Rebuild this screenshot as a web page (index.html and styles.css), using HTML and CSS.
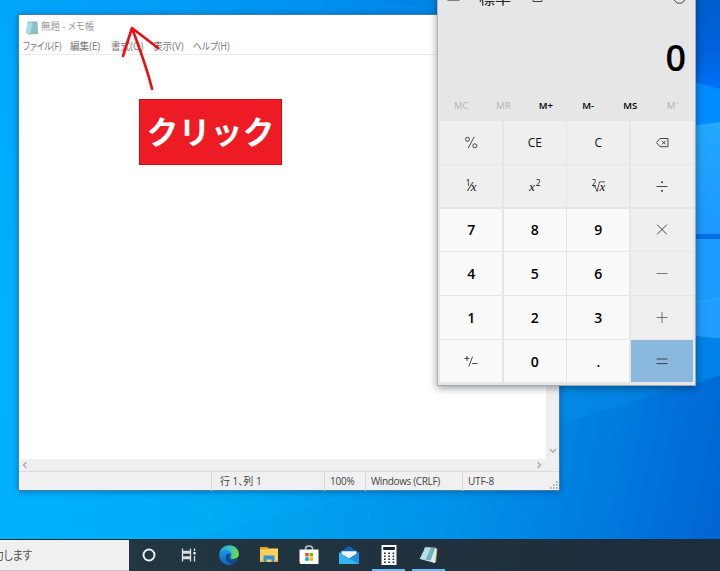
FILE: index.html
```html
<!DOCTYPE html>
<html lang="ja">
<head>
<meta charset="utf-8">
<title>デスクトップ</title>
<link rel="stylesheet" href="styles.css">
</head>
<body>
<main class="desktop">
  <svg class="wallpaper" viewBox="0 0 720 571" preserveAspectRatio="none" aria-hidden="true">
    <defs>
      <linearGradient id="base" gradientUnits="userSpaceOnUse" x1="20" y1="350" x2="745" y2="500">
        <stop offset="0" stop-color="#00b2fd"/><stop offset=".3" stop-color="#00abf6"/><stop offset=".6" stop-color="#0094e9"/><stop offset=".8" stop-color="#007ddf"/><stop offset="1" stop-color="#0060d0"/>
      </linearGradient>
      <linearGradient id="top" x1="0" y1="0" x2="1" y2="0">
        <stop offset="0" stop-color="#00a6fa"/><stop offset=".5" stop-color="#0099f3"/><stop offset="1" stop-color="#0084e6"/>
      </linearGradient>
      <linearGradient id="left" x1="0" y1="0" x2="0" y2="1">
        <stop offset="0" stop-color="#00a6fa"/><stop offset="1" stop-color="#00a6fa" stop-opacity="0"/>
      </linearGradient>
      <linearGradient id="corner" x1="0" y1="0" x2="0" y2="1">
        <stop offset="0" stop-color="#005fd0"/><stop offset=".55" stop-color="#0062dc"/><stop offset="1" stop-color="#0074ff"/>
      </linearGradient>
      <linearGradient id="beam" x1="0" y1="0" x2="0" y2="1">
        <stop offset="0" stop-color="#22a8ff"/><stop offset="1" stop-color="#1e98ff"/>
      </linearGradient>
    </defs>
    <rect width="720" height="571" fill="url(#base)"/>
    <path d="M0 14H20V300H0Z" fill="url(#left)"/>
    <path d="M0 0H440V14H0Z" fill="url(#top)"/>
    <path d="M385 0Q425 6 440 15V0Z" fill="#0085e4"/>
    <path d="M690 0H720V97L690 88Z" fill="url(#corner)"/>
    <path d="M690 81L720 89V134L690 138Z" fill="#008cff"/>
    <path d="M690 126L720 122V234H690Z" fill="url(#beam)"/>
    <path d="M690 234H720V239H690Z" fill="#0070e6"/>
    <path d="M690 239H720V299L690 303Z" fill="#1e9bff"/>
    <path d="M690 303L720 299V338L690 335Z" fill="#229dff"/>
    <path d="M690 303L720 299" stroke="#20b4ff"/>
    <path d="M690 335L720 338V375L690 385Z" fill="#0082e8"/>
    <path d="M690 335L720 338" stroke="#18a2fa"/>
    <path d="M720 375L560 424V385H695Z" fill="#0a98f0" opacity=".25"/>
    <path d="M190 539Q290 512 420 480V539Z" fill="#0093e8" opacity=".12"/>
  </svg>

  <section class="notepad">
    <header class="np-title">
      <svg class="np-icon" viewBox="0 0 14 14"><path d="M3.500 1.500 12.500 1.200 13.200 13 3 13.400Z" fill="#b9a98c"/><path d="M2.800 1 12 1 11.500 12.200 1 12.200Z" fill="#86c2d1"/><path d="M2.800 1 7.500 1 5.500 12.200 1 12.200Z" fill="#a9dbe4"/><path d="M3 1H12" stroke="#5a99aa" stroke-dasharray="1 .7"/></svg>
      <span class="cap"><span class="sq title-text">無題 - メモ帳</span></span>
    </header>
    <nav class="np-menu">
      <span class="m1"><span class="sq">ファイル(F)</span></span>
      <span class="m2"><span class="sq">編集(E)</span></span>
      <span class="m3"><span class="sq">書式(O)</span></span>
      <span class="m4"><span class="sq">表示(V)</span></span>
      <span class="m5"><span class="sq">ヘルプ(H)</span></span>
    </nav>
    <div class="np-body">
      <div class="np-page"></div>
      <div class="np-vscroll"><svg width="8" height="6" viewBox="0 0 8 6"><path d="M1 1 4 4.200 7 1"/></svg></div>
    </div>
    <div class="np-hscroll">
      <svg width="6" height="8" viewBox="0 0 6 8"><path d="M4.500 1 1.500 4 4.500 7"/></svg>
      <svg width="6" height="8" viewBox="0 0 6 8"><path d="M1.500 1 4.500 4 1.500 7"/></svg>
    </div>
    <footer class="np-status">
      <span></span>
      <span class="pos">行 1、列 1</span>
      <span>100%</span>
      <span class="eol">Windows (CRLF)</span>
      <span>UTF-8</span>
      <svg class="grip" viewBox="0 0 8 8"><path d="M6 0h1.700v1.700H6zM3 3h1.700v1.700H3zM6 3h1.700v1.700H6zM0 6h1.700v1.700H0zM3 6h1.700v1.700H3zM6 6h1.700v1.700H6z" fill="#aaa"/></svg>
    </footer>
  </section>

  <section class="calc">
    <header class="calc-head">
      <svg class="burger" viewBox="0 0 14 12"><path d="M.5 1.500h13M.5 6h13M.5 10.500h13"/></svg>
      <span class="mode">標準</span>
      <svg class="ontop" viewBox="0 0 12 12"><path d="M1 1h10v4M1 1v7M2 8.500V11.500H11V6"/></svg>
      <svg class="history" viewBox="0 0 13 13"><circle cx="6.500" cy="6.500" r="5.800"/><path d="M6.500 3v3.500h3"/></svg>
    </header>
    <output class="display">0</output>
    <div class="memory"><span class="off">MC</span><span class="off">MR</span><span>M+</span><span>M-</span><span>MS</span><span class="off">M<small>ˇ</small></span></div>
    <div class="keys">
      <button class="fn"><svg viewBox="0 0 16 16"><circle cx="4.500" cy="4.300" r="2"/><circle cx="11.800" cy="10.800" r="2"/><path d="M11.200 1.800 5.200 13.200"/></svg></button>
      <button class="fn">CE</button>
      <button class="fn">C</button>
      <button class="fn"><svg viewBox="0 0 16 16"><path d="M6 3.500h8v8.200H6L2.500 7.600ZM8 5.800l3.600 3.600M11.600 5.800 8 9.400"/></svg></button>
      <button class="fn math"><span class="frac"><sup>1</sup><b>∕</b><i>x</i></span></button>
      <button class="fn math"><i>x</i><sup class="pow">2</sup></button>
      <button class="fn math"><sup class="root">2</sup><svg class="radical" viewBox="0 0 13 13"><path d="M.5 7 2 6 4.500 12 7 1.500H13"/></svg><i class="under">x</i></button>
      <button class="fn"><svg viewBox="0 0 16 16"><path d="M2.500 7.500h11"/><circle cx="8" cy="3.200" r=".6" class="dot"/><circle cx="8" cy="11.800" r=".6" class="dot"/></svg></button>
      <button>7</button><button>8</button><button>9</button>
      <button class="fn"><svg viewBox="0 0 16 16"><path d="m3.200 2.700 9.600 9.600M12.800 2.700 3.200 12.300"/></svg></button>
      <button>4</button><button>5</button><button>6</button>
      <button class="fn"><svg class="thin" viewBox="0 0 16 16"><path d="M2.500 7.500h11"/></svg></button>
      <button>1</button><button>2</button><button>3</button>
      <button class="fn"><svg class="thin" viewBox="0 0 16 16"><path d="M2.500 7.500h11M8 2v11"/></svg></button>
      <button><svg viewBox="0 0 16 16"><path d="M1.500 4.500h5M4 2v5M9.600 2.500 5.800 12.500M9.200 9.500h5.300"/></svg></button>
      <button>0</button><button>.</button>
      <button class="equals"><svg viewBox="0 0 16 16"><path d="M2.500 5h11M2.500 9.600h11"/></svg></button>
    </div>
  </section>

  <div class="callout">クリック</div>
  <svg class="arrow" viewBox="0 0 50 70"><path d="M31 63Q27 45 11 2M2 30 11 2 37 22"/></svg>

  <footer class="taskbar">
    <div class="search"><span class="search-text">力します</span></div>
    <div class="task"><svg viewBox="0 0 20 20"><circle cx="10" cy="10" r="5.500" fill="none" stroke="#f2f2f2" stroke-width="1.900"/></svg></div>
    <div class="task"><svg viewBox="0 0 20 20"><path d="M3.500 3.500V6.500H11.500V3.500M3.500 16.500V13.500H11.500V16.500M3.500 8h8v4h-8zM15.500 3.500V6M15.500 11v5.500" fill="none" stroke="#d9dee0" stroke-width="1.300"/><path d="M14.300 7h2.400v2.500h-2.400z" fill="#e8ecee"/></svg></div>
    <div class="task"><svg viewBox="0 0 20 20"><defs><linearGradient id="e1" x1="0" y1="0" x2="1" y2=".2"><stop stop-color="#1d9fd8"/><stop offset=".5" stop-color="#2dc0d0"/><stop offset="1" stop-color="#6fd64c"/></linearGradient><linearGradient id="e2" x1="0" y1="0" x2="0" y2="1"><stop stop-color="#2097e0"/><stop offset="1" stop-color="#0f65bc"/></linearGradient></defs><path d="M.3 9C.8 3.800 5 .2 10 .2 16 .2 19.900 4.500 19.900 9c0 3.300-2.600 4.900-5.400 4.900-2.400 0-3.600-.7-3.100-1.500 1.500-2.200.3-5.600-3.400-5.700C4.200 6.600 1.500 7.500.3 9Z" fill="url(#e1)"/><path d="M.2 10C.5 7 3.400 5.100 6.800 5.100c3.800 0 6.100 2.200 6 4.800-.1 1.400-1.500 1.500-1.500 2.700 0 1.900 4 3.300 7.300.9C17 17.500 14 19.900 10 19.900 4.600 19.900 0 15.600.2 10Z" fill="url(#e2)"/><path d="M7.200 10.300c-1.500 4.500 1.600 8.700 6.300 8.900 2.400-.9 4.300-2.800 5.300-5.300-4 2.500-8.500 1-8.400-2.500 0-1 .6-1.700.9-2.500-1.600-.6-3.500-.2-4.100 1.400Z" fill="#114a93"/></svg></div>
    <div class="task"><svg viewBox="0 0 20 20"><path d="M1 2h7l1.500 1.500H19V17H1Z" fill="#ffd766"/><path d="M1 2h7l1 2.500H1Z" fill="#e8a30c"/><path d="M1 6h18v11H1Z" fill="#ffcf55"/><path d="M4.500 17v-6.500h11V17h-3v-2.500h-5V17Z" fill="#2f96de"/><path d="M1 15.500h3.500V17H1zM15.500 15.500H19V17h-3.500z" fill="#f2b735"/></svg></div>
    <div class="task"><svg viewBox="0 0 20 20"><path d="M6.500 5V3.500C6.500 0 13.500 0 13.500 3.500V5" fill="none" stroke="#bfc8cb" stroke-width="1.500"/><path d="M.5 4.500h19V19H2Q.5 19 .5 17Z" fill="#fff"/><path d="M6.200 8h3.500v3.500H6.200z" fill="#f25022"/><path d="M10.500 8H14v3.500h-3.500z" fill="#7fba00"/><path d="M6.200 12.300h3.500v3.500H6.200z" fill="#00a4ef"/><path d="M10.500 12.300H14v3.500h-3.500z" fill="#ffb900"/></svg></div>
    <div class="task"><svg viewBox="0 0 20 20"><path d="M0 7.500 10 1l10 6.500L10 14Z" fill="#0f60b6"/><path d="M2.500 6.300h15V9L10 13.500 2.500 9Z" fill="#f3f5f6"/><path d="M0 7.500 10 13.500 20 7.500V19H0Z" fill="#5ccaf5"/><path d="M0 7.500 20 19H0Z" fill="#35b5ef"/><path d="M20 7.500V19L10 13.500Z" fill="#1e8edb"/></svg></div>
    <div class="task active"><svg viewBox="0 0 20 20"><path d="M2.500 0h15v20h-15z" fill="#fafafa"/><path d="M4.200 2h11.600v3H4.200z" fill="#19232a"/><path d="M5 8.300h10.500M5 11.300h10.500M5 14.300h10.500M5 17.300h10.500" stroke="#19232a" stroke-width="1.500" stroke-dasharray="1.600 2.700"/></svg></div>
    <div class="task active"><svg viewBox="0 0 20 20"><path d="M7 2 18.500 4 17 17 14 18Z" fill="#d3a048"/><path d="M6 2 17.500 3 16 18 3 14.500Z" fill="#e4eef0"/><path d="M6.500 2 16.500 2.800 11.800 15.500.8 14Z" fill="#6fb3bf"/><path d="M6.500 2 12 2.500 6.500 14.700.8 14Z" fill="#b8dde2"/><path d="M16.500 3 16 17.500 11.800 15.500Z" fill="#dcecee"/><path d="M6.500 2H17" stroke="#3e5358" stroke-width="1.200" stroke-dasharray="1 .8"/></svg></div>
  </footer>
</main>
</body>
</html>
```

FILE: styles.css
```css
* { box-sizing: border-box; }
body { margin: 0; font-family: "Open Sans", "Noto Sans CJK JP", sans-serif; }
.desktop { position: relative; width: 720px; height: 571px; overflow: hidden; background: #00a2f4; }
.wallpaper { position: absolute; inset: 0; width: 100%; height: 100%; }

.notepad {
  position: absolute; left: 18px; top: 14px; width: 542px; height: 477px;
  display: flex; flex-direction: column; background: #fff;
  border: 1px solid #3f7fae; box-shadow: 0 1px 6px rgba(0, 30, 80, .4);
}
.np-title { height: 25px; padding-left: 6px; display: flex; align-items: center; gap: 2px; color: #999; }
.np-icon { width: 14px; height: 14px; }
.sq {
  display: block; width: max-content; white-space: nowrap; transform-origin: 0 50%;
  font: 10px/14px "Open Sans", "Noto Sans CJK JP", sans-serif; font-feature-settings: "palt";
}
.cap { margin-top: -4px; }
.cap .title-text { transform: scaleX(.94); }
.np-menu { display: flex; height: 15px; padding-left: 4px; color: #777; border-bottom: 1px solid #ececec; }
.np-menu .m1 { width: 47px; }
.np-menu .m2 { width: 41px; }
.np-menu .m3 { width: 42px; }
.np-menu .m4 { width: 40px; }
.np-menu .sq { transform: scaleX(.96); margin-top: -1px; }
.np-menu .m1 .sq { transform: scaleX(.84); }
.np-menu .m5 .sq { transform: scaleX(.87); }
.np-body { flex: 1; display: flex; }
.np-page { flex: 1; background: #fff; }
.np-vscroll { width: 13px; background: #efefef; display: flex; align-items: flex-end; justify-content: center; padding-bottom: 5px; }
.np-vscroll svg, .np-hscroll svg { fill: none; stroke: #aaa; stroke-width: 1.3; }
.np-hscroll { height: 12px; background: #efefef; display: flex; align-items: center; justify-content: space-between; padding: 0 17px 0 3px; }
.np-status {
  position: relative; height: 19px; display: grid; grid-template-columns: 193px 113px 41px 97px 1fr;
  background: #f0f0f0; border-top: 1px solid #dcdcdc; color: #444; font-size: 10px; line-height: 19px;
}
.np-status span { padding-left: 5px; border-right: 1px solid #d9d9d9; white-space: nowrap; letter-spacing: -.2px; }
.np-status .eol { letter-spacing: -.36px; }
.np-status span:last-of-type { border-right: 0; }
.np-status .pos { padding-left: 8px; letter-spacing: 0; font-feature-settings: "palt"; }
.grip { position: absolute; right: 1px; bottom: 1px; width: 8px; height: 8px; }

.calc {
  position: absolute; left: 437px; top: -30px; width: 259px; height: 416px;
  padding: 0 3px 0 2px; background: #e6e6e6; border: 1px solid #9caab5; border-left-color: #b5b5b5; border-top: 0;
  box-shadow: 0 2px 8px rgba(0, 0, 0, .4);
}
.calc-head { height: 40px; display: flex; align-items: flex-start; padding: 0 6px 0 7px; }
.calc-head svg { fill: none; stroke: #444; stroke-width: 1; }
.burger { width: 13px; height: 12px; margin-top: 20px; }
.mode { margin: 18px 20px 0 19px; font-size: 16px; line-height: 20px; color: #222; }
.ontop { width: 12px; height: 12px; margin-top: 20px; }
.history { width: 13px; height: 13px; margin: 21px 0 0 auto; }
.display { display: block; height: 86px; padding: 21px 6px 0 0; font: 600 36px/54px "Open Sans", sans-serif; text-align: right; color: #000; }
.memory { height: 25px; display: grid; grid-template-columns: repeat(6, 42.3px); font-size: 9.5px; line-height: 20px; font-weight: 600; text-align: center; color: #000; }
.memory .off { color: #b3b3b3; font-weight: 400; }
.memory small { font-size: 8px; position: relative; top: -1px; }
.keys { display: grid; grid-template-columns: repeat(4, 62.3px); grid-auto-rows: 42.5px; gap: 1.3px; }
.keys button {
  display: flex; align-items: center; justify-content: center; padding: 1px 0 0; border: 0;
  background: #fafafa; color: #000; font: 600 14px/20px "Open Sans", sans-serif;
}
.keys button.fn { background: #efefef; font-weight: 400; font-size: 12px; color: #111; }
.keys button.equals { background: #8ab8df; }
.keys svg { width: 16px; height: 16px; fill: none; stroke: #333; stroke-width: .9; }
.keys .thin { stroke: #666; }
.keys .dot { fill: #333; }
.math i { font-family: "Liberation Serif", serif; font-size: 13px; }
.math sup { font-size: 8.5px; line-height: 8px; }
.frac { display: flex; align-items: center; }
.frac sup { margin-bottom: 7px; }
.frac b { font: 400 13px "Liberation Sans", sans-serif; margin: 0 -1px; }
.pow { margin: 0 0 8px 1px; }
.root { margin: 0 -3px 8px 0; }
.keys .radical { width: 12px; height: 13px; }
.under { margin-left: -6px; }

.callout {
  position: absolute; left: 139px; top: 99px; width: 143px; height: 66px;
  background: #ed1c24; border: 1px solid #d80b0f; color: #fff;
  font: 700 32px/61px "Noto Sans CJK JP", sans-serif; text-align: center; white-space: nowrap;
}
.arrow { position: absolute; left: 121px; top: 26px; width: 50px; height: 70px; fill: none; stroke: #ed0c12; stroke-width: 2.6; stroke-linecap: round; stroke-linejoin: round; }

.taskbar { position: absolute; left: 0; bottom: 0; width: 720px; height: 32px; display: flex; background: linear-gradient(90deg, #223942, #1e2c3d); border-top: 1px solid #152e38; }
.search { width: 128.5px; overflow: hidden; background: #f0f0f0; color: #555; border-bottom: 1px solid #c8c8c8; }
.search-text { display: block; width: max-content; margin-left: -7px; font: 12px/30px "Noto Sans CJK JP", sans-serif; font-feature-settings: "palt"; letter-spacing: -.4px; transform: scaleX(.92); transform-origin: 0 50%; }
.task { width: 40px; height: 31px; display: flex; justify-content: center; align-items: center; padding-bottom: 1px; }
.task svg { width: 20px; height: 20px; }
.task.active { background: linear-gradient(#76b9ed, #76b9ed) center bottom / 33px 2px no-repeat; }
```
